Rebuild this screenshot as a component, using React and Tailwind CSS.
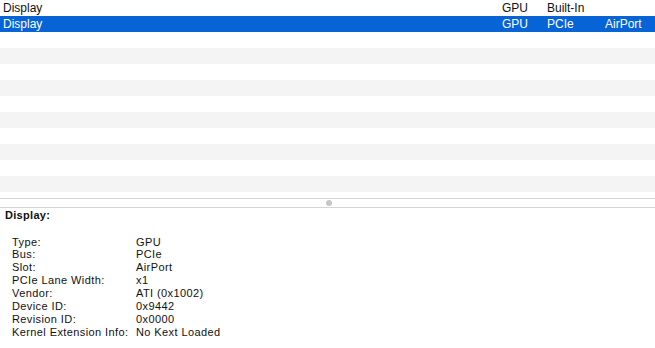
import React from "react";

const rows = [
  { name: "Display", type: "GPU", bus: "Built-In", slot: "" },
  { name: "Display", type: "GPU", bus: "PCIe", slot: "AirPort", selected: true },
];

const details = [
  ["Type:", "GPU"],
  ["Bus:", "PCIe"],
  ["Slot:", "AirPort"],
  ["PCIe Lane Width:", "x1"],
  ["Vendor:", "ATI (0x1002)"],
  ["Device ID:", "0x9442"],
  ["Revision ID:", "0x0000"],
  ["Kernel Extension Info:", "No Kext Loaded"],
];

export default function App() {
  const empty = Array.from({ length: 10 }, (_, i) => i + 2);

  return (
    <div
      className="w-[655px] h-[348px] bg-white overflow-hidden flex flex-col text-[#111]"
      style={{ fontFamily: '"Liberation Sans", Arial, sans-serif' }}
    >
      {/* Device table */}
      <div className="flex flex-col h-[198px]">
        {rows.map((r, i) => (
          <div
            key={i}
            className={`grid grid-cols-[499px_45px_58px_1fr] px-[3px] h-4 items-center text-[12px] leading-4 ${
              r.selected ? "bg-[#0764d6] text-white" : "bg-white"
            }`}
          >
            <span>{r.name}</span>
            <span>{r.type}</span>
            <span>{r.bus}</span>
            <span>{r.slot}</span>
          </div>
        ))}
        {empty.map((i) => (
          <div
            key={i}
            className={`h-4 shrink-0 ${i % 2 === 1 ? "bg-[#f4f4f4]" : "bg-white"}`}
          />
        ))}
      </div>

      {/* Splitter */}
      <div className="h-[10px] border-y border-[#d4d4d4] flex items-center justify-center">
        <div className="w-[6px] h-[6px] rounded-full bg-[#c6c6c6] ml-[2px]" />
      </div>

      {/* Details */}
      <div className="flex flex-col text-[11px] tracking-[0.4px]">
        <div className="pl-[5px] font-bold leading-[14px] tracking-[0.3px]">Display:</div>
        <div className="mt-[13.5px] grid grid-cols-[124px_1fr] pl-3 leading-[12.86px]">
          {details.map(([k, v]) => (
            <React.Fragment key={k}>
              <span>{k}</span>
              <span>{v}</span>
            </React.Fragment>
          ))}
        </div>
      </div>
    </div>
  );
}
